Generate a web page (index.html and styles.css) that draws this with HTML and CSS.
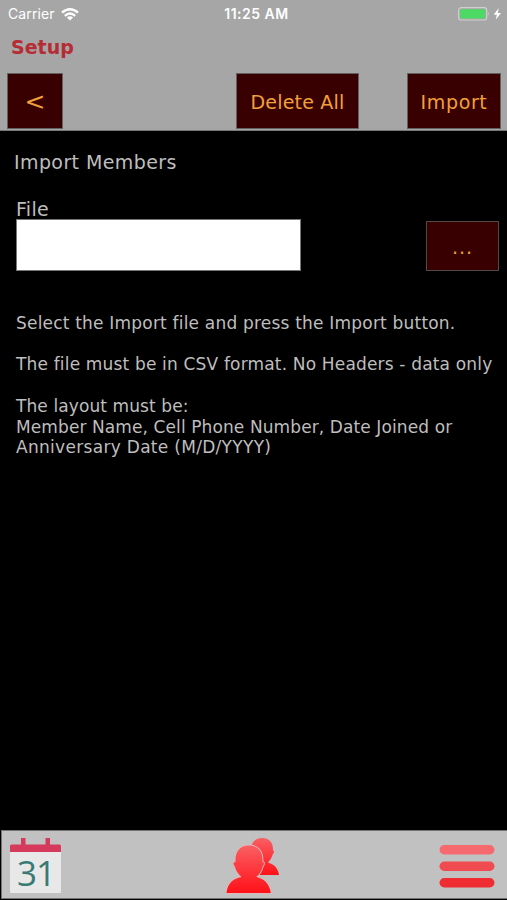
FILE: index.html
```html
<!DOCTYPE html>
<html lang="en">
<head>
<meta charset="utf-8">
<title>Setup</title>
<link rel="stylesheet" href="styles.css">
</head>
<body>
<header class="header">
  <div class="status">
    <div class="status-left"><span class="carrier">Carrier</span>
      <svg class="wifi" width="18" height="13" viewBox="0 0 18 13"><g fill="none" stroke="#fff" stroke-width="2.3"><path d="M1 4.7Q9-2.2 17 4.7"/><path d="M3.8 7.8Q9 3.3 14.2 7.8"/></g><path fill="#fff" d="M5.9 9.4Q9 7 12.1 9.4L9 12.6Z"/></svg>
    </div>
    <span class="clock">11:25 AM</span>
    <div class="status-right">
      <svg width="44" height="14" viewBox="0 0 44 14"><rect x=".7" y=".7" width="28" height="12.3" rx="2.5" fill="none" stroke="#d0d0d0" stroke-width="1.2"/><rect x="2.2" y="2.2" width="25" height="9.3" rx="1" fill="#4cd964"/><path d="M30.2 4.8q1.6 2 0 4z" fill="#d0d0d0"/><path d="M40.8 1 35.7 7.700h3.200l-1.200 5L43 6h-3.300z" fill="#fff"/></svg>
    </div>
  </div>
  <h1 class="title">Setup</h1>
  <nav class="actions">
    <button class="btn back">&lt;</button>
    <button class="btn delete">Delete All</button>
    <button class="btn import">Import</button>
  </nav>
</header>
<main class="content">
  <h2 class="heading">Import Members</h2>
  <div class="file-row">
    <div class="field">
      <label class="label" for="file">File</label>
      <input class="file" id="file" type="text">
    </div>
    <button class="btn browse">...</button>
  </div>
  <div class="help">
    <p class="wide">Select the Import file and press the Import button.</p>
    <p class="medium">The file must be in CSV format. No Headers - data only</p>
    <p class="narrow">The layout must be:<br>Member Name, Cell Phone Number, Date Joined or<br><span class="widest">Anniversary Date (M/D/YYYY)</span></p>
  </div>
</main>
<footer class="tabs">
  <svg class="calendar" width="52" height="56" viewBox="0 0 52 56"><path d="M0 13h51v41q0 1-1 1H1q-1 0-1-1z" fill="#e8e8e8"/><path d="M0 14V8q0-1.500 1.500-1.500H11V0h4.500v6.500h20V0H40v6.500h9.500Q51 6.500 51 8v6z" fill="#d5395b"/><text class="day" x="7" y="48">31</text></svg>
  <svg class="people" width="54" height="56" viewBox="0 0 54 56"><defs><linearGradient id="person" x1="0" y1="0" x2="0" y2="1"><stop offset="0" stop-color="#fa5f63"/><stop offset="1" stop-color="#ff1118"/></linearGradient></defs>
    <path fill="url(#person)" d="M36 0C43 0 47 4.500 47 11v1.500q1.500 .5 .8 2l-1.300 2.500q-1 4-4.500 7.500c5 1.500 10 4.500 11 12.500H25V8Q28 0 36 0Z"/>
    <path fill="url(#person)" stroke="#dcb9b9" stroke-width="1.800" paint-order="stroke" d="M23 7.500c9 0 13.500 6 13.500 14.500v2q2 0 1.300 2.500l-1.500 3q-1 5-6 9.500c7 1.500 13.200 6 14.500 16H.5c1-10 7-14.500 15-16q-5-4.500-6.500-10l-1.500-3Q7 24 9.500 24v-2C9.500 13.500 14 7.500 23 7.500Z"/></svg>
  <svg class="menu" width="56" height="43" viewBox="0 0 56 43"><rect x=".5" width="55" height="9.500" rx="4.750" fill="#f6696f"/><rect x=".5" y="16.500" width="55" height="9.500" rx="4.750" fill="#f14b52"/><rect x=".5" y="33" width="55" height="9.500" rx="4.750" fill="#ef2c31"/></svg>
</footer>
</body>
</html>
```

FILE: styles.css
```css
* { box-sizing: border-box; }
body {
  margin: 0;
  width: 507px;
  height: 900px;
  display: flex;
  flex-direction: column;
  overflow: hidden;
  background: #000;
  color: #bebebe;
  font-family: Verdana, "DejaVu Sans", sans-serif;
}
h1, h2, p { margin: 0; font-weight: normal; }
svg { display: block; }
.header {
  height: 131px;
  background: #a6a6a6;
  border-bottom: 1px solid #777;
}
.status {
  height: 28px;
  display: grid;
  grid-template-columns: 1fr auto 1fr;
  align-items: center;
  padding: 0 4px 0 8px;
  color: #fff;
  font: 14px/28px Inter, sans-serif;
}
.status-left { display: flex; align-items: center; gap: 6px; }
.carrier { letter-spacing: 0.1px; }
.status-right { display: flex; justify-content: flex-end; padding-right: 1px; }
.clock { font-weight: 600; letter-spacing: 0.5px; padding-left: 2px; }
.title {
  height: 45px;
  padding: 8px 0 0 11px;
  color: #b52c35;
  font-size: 19px;
  line-height: 23px;
  font-weight: bold;
}
.actions { display: flex; padding: 0 6px 0 7px; }
.btn {
  height: 56px;
  padding: 2px 0 0;
  background: #380000;
  border: 1px solid #656060;
  color: #f2a03a;
  font: 19px/24px Verdana, "DejaVu Sans", sans-serif;
}
.back { width: 56px; font-size: 25px; }
.delete { width: 123px; margin-left: auto; letter-spacing: 0.2px; }
.import { width: 94px; margin-left: 48px; letter-spacing: 0.65px; }
.content { flex: 1; padding: 19px 8px 0 16px; }
.heading { margin-left: -2px; font-size: 19px; line-height: 24px; letter-spacing: 0.4px; }
.file-row {
  display: flex;
  justify-content: space-between;
  align-items: flex-end;
  margin-top: 23px;
}
.label { display: block; font-size: 19px; line-height: 24px; height: 22px; letter-spacing: 0.3px; }
.file {
  display: block;
  width: 285px;
  height: 52px;
  background: #fff;
  border: 1px solid #777;
}
.browse { width: 73px; height: 50px; border-color: #514848; letter-spacing: 1px; }
.help { margin-top: 41.6px; font-size: 17px; line-height: 20.8px; white-space: nowrap; }
.help p + p { margin-top: 20.8px; }
.wide { letter-spacing: 0.2px; }
.medium { letter-spacing: 0.17px; }
.narrow { letter-spacing: 0.1px; }
.widest { letter-spacing: 0.3px; }
.tabs {
  height: 69px;
  margin: 0 0 1px 1px;
  display: flex;
  justify-content: space-between;
  align-items: center;
  padding: 2px 12px 0 8px;
  background: #c1c1c1;
  border: 1px solid #737373;
  border-right: 0;
}
.calendar { overflow: visible; }
.people { margin-left: 5px; }
.menu { margin-top: 2px; }
.day { font-family: "Open Sans", sans-serif; font-size: 35px; letter-spacing: -1px; fill: #397b74; }
```
